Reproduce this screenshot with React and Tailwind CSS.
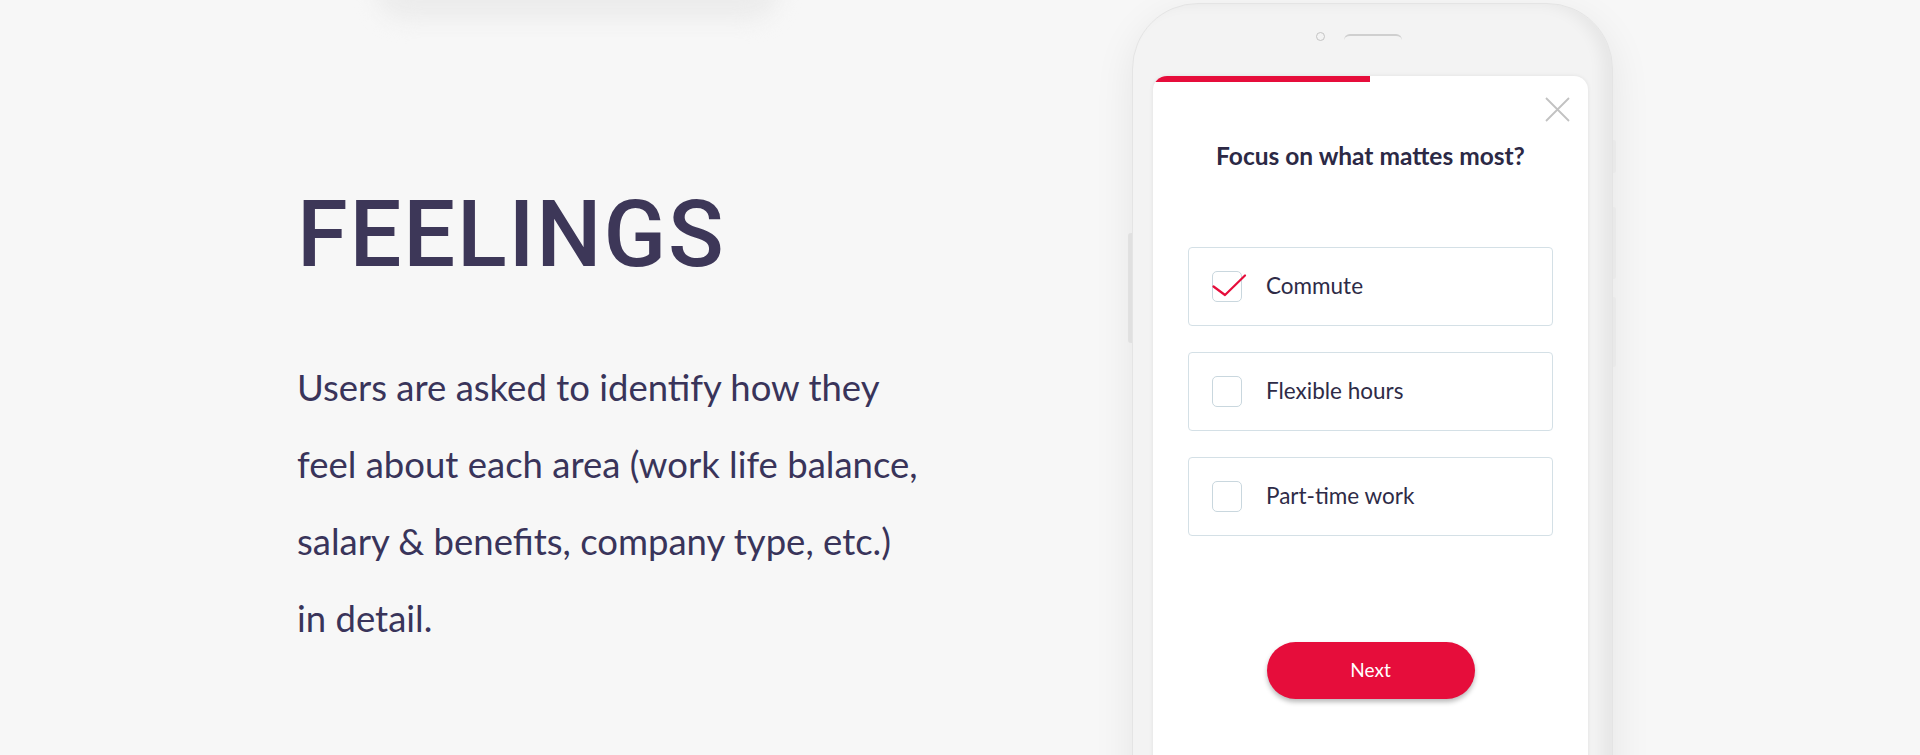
import React from 'react';

const options = [
  { label: 'Commute', checked: true },
  { label: 'Flexible hours', checked: false },
  { label: 'Part-time work', checked: false },
];

const lato = "[font-family:Lato,'Noto_Sans',sans-serif]";

function Checkbox({ checked }) {
  return (
    <div className="relative h-[31px] w-[30px] shrink-0 rounded-[5px] border border-[#c9d7de] bg-white">
      {checked && (
        <svg
          className="absolute left-[-1px] top-[-1px] overflow-visible"
          width="34"
          height="30"
          viewBox="0 0 34 30"
          fill="none"
        >
          <path d="M1.5 15.5 L13 24 L33 4.5" stroke="#e60d3b" strokeWidth="2.2" strokeLinecap="round" strokeLinejoin="round" />
        </svg>
      )}
    </div>
  );
}

function Phone() {
  return (
    <div className="flex shrink-0 pt-[3px]">
      {/* left side button */}
      <div className="w-[4px] pt-[230px]">
        <div className="h-[110px] rounded-l-[3px] bg-[#e9e9e9]" />
      </div>

      <div className="h-[900px] w-[481px] rounded-[66px] border border-[#e4e4e4] bg-[#f3f3f3] shadow-[inset_-10px_0_14px_rgba(0,0,0,0.05),0_12px_40px_rgba(0,0,0,0.08)]">
        {/* earpiece + camera */}
        <div className="flex items-center justify-center gap-[19px] pr-[28px] pt-[28px]">
          <div className="h-[9px] w-[9px] rounded-full border border-[#c4c4c4]" />
          <div className="h-[6px] w-[58px] rounded-t-full border-t-2 border-[#cfcfcf]" />
        </div>

        {/* screen */}
        <div className="ml-[20px] mt-[35px] flex h-[760px] w-[435px] flex-col overflow-hidden rounded-[14px] bg-white shadow-[0_0_4px_rgba(0,0,0,0.08)]">
          <div className="h-[6px] w-[217px] bg-[#e60d3b]" />

          <div className="flex justify-end pr-[18px] pt-[15px]">
            <button className="h-[25px] w-[25px]">
              <svg width="25" height="25" viewBox="0 0 25 25" fill="none">
                <path d="M1 1 L24 24 M24 1 L1 24" stroke="#c2c2c2" strokeWidth="1.8" />
              </svg>
            </button>
          </div>

          <h3 className={`mt-[19px] text-center text-[24.5px] font-bold leading-[30px] text-[#2c2945] ${lato}`}>
            Focus on what mattes most?
          </h3>

          <div className="mx-[35px] mt-[76px] flex flex-col gap-[26px]">
            {options.map((o) => (
              <div
                key={o.label}
                className="flex h-[79px] items-center gap-[24px] rounded-[4px] border border-[#d4e0e6] pl-[23px]"
              >
                <Checkbox checked={o.checked} />
                <span className={`text-[22.5px] leading-none text-[#2e2b47] ${lato}`}>{o.label}</span>
              </div>
            ))}
          </div>

          <div className="mt-[106px] flex justify-center">
            <button className={`h-[57px] w-[208px] rounded-full bg-[#e60d3b] text-[19px] text-white shadow-[0_3px_5px_rgba(0,0,0,0.28)] ${lato}`}>
              Next
            </button>
          </div>
        </div>
      </div>

      {/* right side buttons */}
      <div className="flex w-[3px] flex-col gap-[34px] pt-[137px]">
        <div className="h-[33px] rounded-r-[2px] bg-[#e9e9e9]" />
        <div className="h-[72px] rounded-r-[2px] bg-[#e9e9e9]" />
        <div className="-mt-[16px] h-[70px] rounded-r-[2px] bg-[#e9e9e9]" />
      </div>
    </div>
  );
}

export default function App() {
  return (
    <div className="relative h-[755px] w-full overflow-hidden bg-[#f7f7f7]">
      {/* faint shadow of the section above */}
      <div className="absolute left-[375px] top-[-45px] h-[65px] w-[405px] rounded-[50px] bg-[#ececec] blur-[10px]" />

      <div className="relative flex">
        <div className="w-[1128px] shrink-0 pl-[297px] pt-[189px]">
          <h1 className="text-[92px] font-medium leading-[92px] tracking-[1.8px] text-[#3d3758] [font-family:Roboto,'Liberation_Sans',sans-serif]">
            FEELINGS
          </h1>
          <p className={`mt-[68px] w-[680px] text-[36.5px] leading-[77px] text-[#39345a] ${lato}`}>
            Users are asked to identify how they
            <br />
            feel about each area (work life balance,
            <br />
            salary &amp; benefits, company type, etc.)
            <br />
            in detail.
          </p>
        </div>
        <Phone />
      </div>
    </div>
  );
}
